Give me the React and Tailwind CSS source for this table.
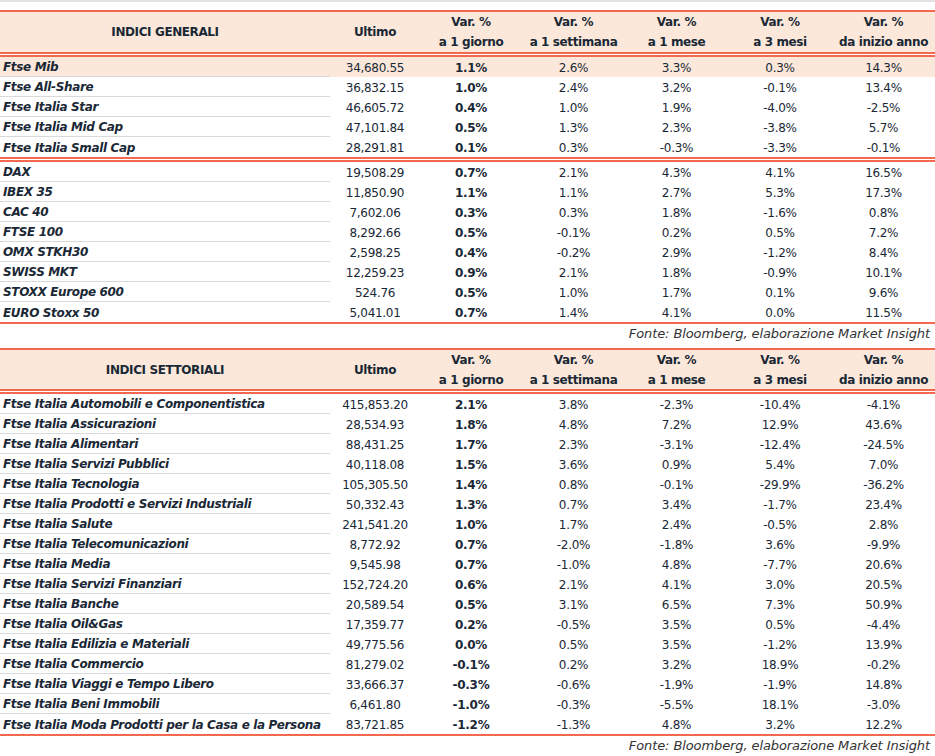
import React from "react";

const gen1 = [
  ["Ftse Mib", "34,680.55", "1.1%", "2.6%", "3.3%", "0.3%", "14.3%"],
  ["Ftse All-Share", "36,832.15", "1.0%", "2.4%", "3.2%", "-0.1%", "13.4%"],
  ["Ftse Italia Star", "46,605.72", "0.4%", "1.0%", "1.9%", "-4.0%", "-2.5%"],
  ["Ftse Italia Mid Cap", "47,101.84", "0.5%", "1.3%", "2.3%", "-3.8%", "5.7%"],
  ["Ftse Italia Small Cap", "28,291.81", "0.1%", "0.3%", "-0.3%", "-3.3%", "-0.1%"],
];
const gen2 = [
  ["DAX", "19,508.29", "0.7%", "2.1%", "4.3%", "4.1%", "16.5%"],
  ["IBEX 35", "11,850.90", "1.1%", "1.1%", "2.7%", "5.3%", "17.3%"],
  ["CAC 40", "7,602.06", "0.3%", "0.3%", "1.8%", "-1.6%", "0.8%"],
  ["FTSE 100", "8,292.66", "0.5%", "-0.1%", "0.2%", "0.5%", "7.2%"],
  ["OMX STKH30", "2,598.25", "0.4%", "-0.2%", "2.9%", "-1.2%", "8.4%"],
  ["SWISS MKT", "12,259.23", "0.9%", "2.1%", "1.8%", "-0.9%", "10.1%"],
  ["STOXX Europe 600", "524.76", "0.5%", "1.0%", "1.7%", "0.1%", "9.6%"],
  ["EURO Stoxx 50", "5,041.01", "0.7%", "1.4%", "4.1%", "0.0%", "11.5%"],
];
const sett = [
  ["Ftse Italia Automobili e Componentistica", "415,853.20", "2.1%", "3.8%", "-2.3%", "-10.4%", "-4.1%"],
  ["Ftse Italia Assicurazioni", "28,534.93", "1.8%", "4.8%", "7.2%", "12.9%", "43.6%"],
  ["Ftse Italia Alimentari", "88,431.25", "1.7%", "2.3%", "-3.1%", "-12.4%", "-24.5%"],
  ["Ftse Italia Servizi Pubblici", "40,118.08", "1.5%", "3.6%", "0.9%", "5.4%", "7.0%"],
  ["Ftse Italia Tecnologia", "105,305.50", "1.4%", "0.8%", "-0.1%", "-29.9%", "-36.2%"],
  ["Ftse Italia Prodotti e Servizi Industriali", "50,332.43", "1.3%", "0.7%", "3.4%", "-1.7%", "23.4%"],
  ["Ftse Italia Salute", "241,541.20", "1.0%", "1.7%", "2.4%", "-0.5%", "2.8%"],
  ["Ftse Italia Telecomunicazioni", "8,772.92", "0.7%", "-2.0%", "-1.8%", "3.6%", "-9.9%"],
  ["Ftse Italia Media", "9,545.98", "0.7%", "-1.0%", "4.8%", "-7.7%", "20.6%"],
  ["Ftse Italia Servizi Finanziari", "152,724.20", "0.6%", "2.1%", "4.1%", "3.0%", "20.5%"],
  ["Ftse Italia Banche", "20,589.54", "0.5%", "3.1%", "6.5%", "7.3%", "50.9%"],
  ["Ftse Italia Oil&Gas", "17,359.77", "0.2%", "-0.5%", "3.5%", "0.5%", "-4.4%"],
  ["Ftse Italia Edilizia e Materiali", "49,775.56", "0.0%", "0.5%", "3.5%", "-1.2%", "13.9%"],
  ["Ftse Italia Commercio", "81,279.02", "-0.1%", "0.2%", "3.2%", "18.9%", "-0.2%"],
  ["Ftse Italia Viaggi e Tempo Libero", "33,666.37", "-0.3%", "-0.6%", "-1.9%", "-1.9%", "14.8%"],
  ["Ftse Italia Beni Immobili", "6,461.80", "-1.0%", "-0.3%", "-5.5%", "18.1%", "-3.0%"],
  ["Ftse Italia Moda Prodotti per la Casa e la Persona", "83,721.85", "-1.2%", "-1.3%", "4.8%", "3.2%", "12.2%"],
];

const GRID = "grid grid-cols-[330px_90px_102px_103px_103px_104px_103px]";

function DoubleLine() {
  return (
    <div>
      <div className="h-[2px] bg-[#f2694f]" />
      <div className="h-px bg-white" />
      <div className="h-[2px] bg-[#f2694f]" />
    </div>
  );
}

function Header({ title, h }) {
  const cols = [
    ["Var. %", "a 1 giorno"],
    ["Var. %", "a 1 settimana"],
    ["Var. %", "a 1 mese"],
    ["Var. %", "a 3 mesi"],
    ["Var. %", "da inizio anno"],
  ];
  return (
    <div className={`${GRID} ${h} bg-[#fce8da] font-bold text-[12px] tracking-[-0.4px] text-[#1a2836]`}>
      <div className="flex items-center justify-center">{title}</div>
      <div className="flex items-center justify-center">Ultimo</div>
      {cols.map((c, i) => (
        <div key={i} className="flex flex-col items-center justify-center leading-[20px]">
          <div>{c[0]}</div>
          <div>{c[1]}</div>
        </div>
      ))}
    </div>
  );
}

function Rows({ rows, highlightFirst }) {
  return (
    <div>
      {rows.map((r, i) => {
        const last = i === rows.length - 1;
        const hl = highlightFirst && i === 0;
        return (
          <div key={i} className={`${GRID} h-[20px] text-[12px] tracking-[-0.3px] text-[#1a2836] ${hl ? "bg-[#fce8da]" : ""}`}>
            <div className={`flex items-center pl-[3px] pt-px font-bold italic whitespace-nowrap tracking-[-0.35px] ${last ? "" : "border-b border-[#d9d9d9]"}`}>
              {r[0]}
            </div>
            <div className="flex items-center justify-center pt-px">{r[1]}</div>
            <div className="flex items-center justify-center pt-px font-bold">{r[2]}</div>
            <div className="flex items-center justify-center pt-px">{r[3]}</div>
            <div className="flex items-center justify-center pt-px">{r[4]}</div>
            <div className="flex items-center justify-center pt-px">{r[5]}</div>
            <div className="flex items-center justify-center pt-px">{r[6]}</div>
          </div>
        );
      })}
    </div>
  );
}

function Fonte({ h }) {
  return (
    <div className={`${h} flex items-center justify-end pr-[5px] italic text-[13px] tracking-[-0.1px] text-[#333]`}>
      Fonte: Bloomberg, elaborazione Market Insight
    </div>
  );
}

export default function App() {
  return (
    <div className="w-[935px] h-[756px] bg-white overflow-hidden" style={{ fontFamily: '"DejaVu Sans", sans-serif' }}>
      <div className="h-[2px] bg-[#e2e2e2]" />
      <div className="h-[8px]" />
      <div className="h-[2px] bg-[#f2694f]" />
      <Header title="INDICI GENERALI" h="h-[40px]" />
      <DoubleLine />
      <Rows rows={gen1} highlightFirst />
      <DoubleLine />
      <Rows rows={gen2} />
      <div className="h-[2px] bg-[#f2694f]" />
      <Fonte h="h-[19px]" />
      <div className="h-[5px]" />
      <div className="h-[2px] bg-[#f2694f]" />
      <Header title="INDICI SETTORIALI" h="h-[39px]" />
      <DoubleLine />
      <Rows rows={sett} />
      <div className="h-[2px] bg-[#f2694f]" />
      <Fonte h="h-[19px]" />
    </div>
  );
}
